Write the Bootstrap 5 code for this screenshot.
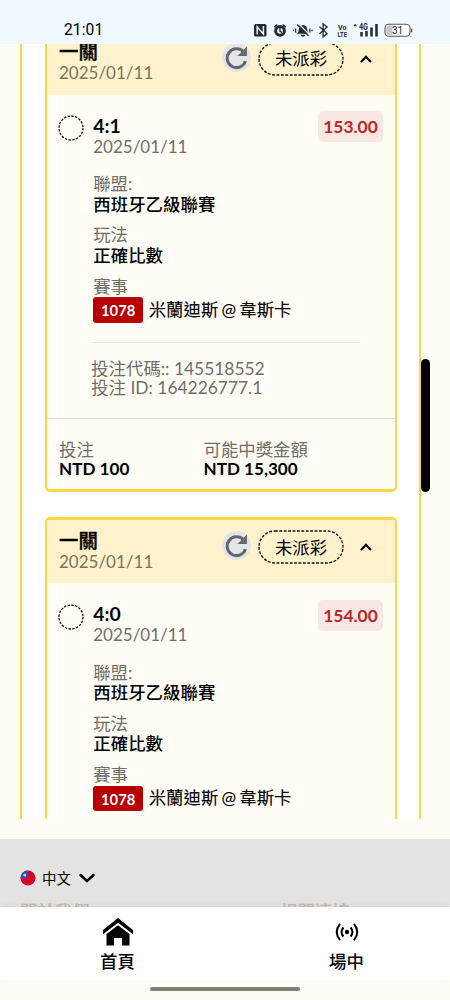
<!DOCTYPE html>
<html lang="zh-Hant">
<head>
<meta charset="utf-8">
<meta name="viewport" content="width=device-width, initial-scale=1">
<title>投注記錄</title>
<link href="https://cdn.jsdelivr.net/npm/bootstrap@5.3.0/dist/css/bootstrap.min.css" rel="stylesheet">
<style>
body{font-family:Lato,"Noto Sans CJK TC",sans-serif;font-size:17.4px;line-height:20.5px;color:#000;background:#fffdf5;width:450px;height:1000px}
.statusbar{height:44px;background:#eff7ff;padding:17px 37px 0 64px}
.clock{font:15.6px/27px Roboto,sans-serif;letter-spacing:.1px}
.viewport{height:775px}
.panel{width:401px;margin-left:20px;height:775px;background:#fff;border:solid #f9d648;border-width:0 2.5px;padding:0 22.5px 0 23px}
.bet{height:463.5px;margin-bottom:25px;border:2.5px solid #f8d748;border-width:3px 2.5px;border-radius:5px;background:#fffdf5}
.bet.scrolled{margin-top:-15.5px}
.bet-head{height:63px;background:#fff2cd;padding:10px 0 0 12px}
.title{font-size:19.4px;font-weight:700;position:relative;top:.5px}
.bet-head .title{-webkit-text-stroke:.35px #000;font-weight:500}
.date{font-size:17px;position:relative;top:1px}
.tools{margin-right:21.5px;gap:7px}
.refresh{width:29px;height:29px;border-radius:50%;background:#e3e5e9;margin-top:-3px}
.pill{width:86px;height:34px;font-size:17.4px}
.pill span{padding-top:2px}
.muted{color:#6f6e6a}
.bet-head .muted{color:#7d7359}
.strong{font-weight:500;letter-spacing:.08px}
.teams{word-spacing:-1.2px;-webkit-text-stroke:.1px #000}
.bet-main{padding:20.5px 0 0 12px;height:323px}
.ring{width:26px;height:26px;margin-right:8.8px;margin-left:-.6px}
.odds{width:65px;height:31px;line-height:32px;margin:-4px 11.5px 0 0;border-radius:5px;background:#f8e7e2;color:#b9292b;font-weight:700;font-size:17.4px;text-align:center}
.field{margin-bottom:10.3px}
.first{margin-top:18px}
.code{background:#b90000;color:#fff;width:50px;height:25.5px;line-height:26px;border-radius:3px;font-size:14.8px;font-weight:700;text-align:center;margin-right:5.5px}
.rule{height:1.5px;background:#e6e3da;width:266px;margin-top:19px}
.ids{line-height:18.5px;margin:17px 0 0 -2px}
.bet-foot{border-top:1px solid #e0ddd6;padding:22.5px 0 0 12px;line-height:18.5px}
.sum{font-size:17.1px;font-weight:700}
.stake{width:144.5px}
.thumb{left:421px;top:359px;width:9px;height:133px;border-radius:5px;background:#000}
.foot{height:68px;margin-top:20px;background:#e3e3e3;padding:28.5px 20px 0}
.lang{font-size:14.5px;line-height:20px}
.lang span{margin:1px 7px 0 6px}
.links{margin-top:13px;line-height:20px;color:#cbb8a8;font-weight:500}
.tabs{height:73px;background:#fff;padding-left:3px;box-shadow:0 -1px 6px rgba(0,0,0,.06);position:relative}
.tab{flex:0 0 229px;padding-top:10px;line-height:22px;font-weight:500}
.homebar{width:150px;height:4px;border-radius:2px;background:#827f76;margin:7px auto 0}
</style>
</head>
<body class="overflow-hidden">
<svg class="d-none">
<symbol id="re" viewBox="0 0 24 24"><path d="M18.600 6.500A9 9 0 1 0 20.600 15.500" fill="none" stroke="#65676b" stroke-width="2.900"/><path d="M22 1.500v9h-9z" fill="#65676b"/></symbol>
<symbol id="up" viewBox="0 0 14 10"><path d="M2 8l5-5.2L12 8" fill="none" stroke="#000" stroke-width="2.2"/></symbol>
<symbol id="ri" viewBox="0 0 26 26"><circle cx="13" cy="13" r="12" fill="none" stroke="#111" stroke-width="1.3" stroke-dasharray="2.4 1.37"/></symbol>
<symbol id="pi" viewBox="0 0 86 34"><rect x="1" y="1" width="84" height="32" rx="16" fill="none" stroke="#111" stroke-width="1.4" stroke-dasharray="2.8 1.6"/></symbol>
</svg>
<header class="statusbar d-flex justify-content-between">
<span class="clock">21:01</span>
<svg width="164" height="26" viewBox="252 17 164 26" style="margin-right:-3px">
<rect x="254" y="24" width="12.5" height="12.5" rx="1.6" fill="#252a2e"/><path d="M257.200 34.500v-7.500l6.200 7v-8" fill="none" stroke="#eff7ff" stroke-width="1.5"/>
<circle cx="280" cy="30.800" r="4.400" fill="none" stroke="#252a2e" stroke-width="3"/><path d="M280 28v3.300l2 1M274.300 27.200l3-2.800M285.700 27.200l-3-2.800" stroke="#252a2e" stroke-width="1.400" fill="none"/>
<path d="M297 33.800q1.800-1.200 1.800-4.800q.3-3.600 4.200-4q3.900.4 4.200 4q0 3.600 1.800 4.800zM300.500 34.800h5q-.5 1.900-2.500 1.900t-2.500-1.900z" fill="#252a2e"/><path d="M298.500 23.800l10.500 10.500" stroke="#eff7ff" stroke-width="1.300"/><path d="M297.200 24.500l11.300 11.300M295.600 28.500v4M293.400 29.800v1.500M309.800 28.500v4M312 29.800v1.500" stroke="#252a2e" stroke-width="1.300"/>
<path d="M319.500 26.800l7.600 6.800-4 3.200V23.800l4 3.200-7.600 6.800" fill="none" stroke="#252a2e" stroke-width="1.300"/>
<g font-family="Roboto" font-weight="700" fill="#252a2e"><text x="338" y="29.500" font-size="7.800" textLength="8.500" lengthAdjust="spacingAndGlyphs">Vo</text><text x="337.500" y="36.600" font-size="7.800" textLength="9.500" lengthAdjust="spacingAndGlyphs">LTE</text><text x="359" y="29.800" font-size="8.400" textLength="9" lengthAdjust="spacingAndGlyphs">4G</text></g>
<path d="M353.300 26.200l1.900-2.500 1.900 2.500z" fill="#252a2e"/>
<path d="M361.500 32v4.500M366.500 31v5.500M371.500 27.500v9M376.500 24v12.500" stroke="#252a2e" stroke-width="2.500"/>
<rect x="385" y="24.300" width="25" height="12" rx="3.800" fill="#fff" stroke="#555a5e" stroke-width="1.100"/><path d="M388.500 25.500h4v9.700h-4q-2.300 0-2.300-2.500v-4.700q0-2.500 2.300-2.500z" fill="#c3c9ce"/><path d="M411.700 28.700v3.500" stroke="#444" stroke-width="1.200"/><text x="397.500" y="34" text-anchor="middle" font-family="Roboto" font-size="10" fill="#222">31</text>
</svg>
</header>
<main class="viewport overflow-hidden">
<div class="panel overflow-hidden">
<article class="bet scrolled">
<div class="bet-head d-flex justify-content-between">
<div><div class="title">一關</div><div class="date muted">2025/01/11</div></div>
<div class="tools d-flex align-items-center align-self-start">
<span class="refresh d-flex align-items-center justify-content-center"><svg width="25" height="25"><use href="#re"/></svg></span>
<span class="pill position-relative d-flex align-items-center justify-content-center"><svg class="position-absolute top-0 start-0" width="86" height="34"><use href="#pi"/></svg><span>未派彩</span></span>
<svg width="14" height="10" class="ms-2"><use href="#up"/></svg>
</div></div>
<div class="bet-main d-flex align-items-start">
<svg class="ring" width="26" height="26"><use href="#ri"/></svg>
<div class="flex-grow-1">
<div class="d-flex justify-content-between"><div><div class="title">4:1</div><div class="date muted">2025/01/11</div></div><div class="odds">153.00</div></div>
<div class="field first"><div class="muted">聯盟:</div><div class="strong">西班牙乙級聯賽</div></div>
<div class="field"><div class="muted">玩法</div><div class="strong">正確比數</div></div>
<div class="muted">賽事</div>
<div class="d-flex align-items-center"><span class="code">1078</span><span class="teams">米蘭迪斯 @ 韋斯卡</span></div>
<div class="rule"></div>
<div class="ids muted">投注代碼:: 145518552<br>投注 ID: 164226777.1</div>
</div></div>
<div class="bet-foot d-flex"><div class="stake"><div class="muted">投注</div><div class="sum">NTD 100</div></div><div><div class="muted">可能中獎金額</div><div class="sum">NTD 15,300</div></div></div>
</article>
<article class="bet">
<div class="bet-head d-flex justify-content-between">
<div><div class="title">一關</div><div class="date muted">2025/01/11</div></div>
<div class="tools d-flex align-items-center align-self-start">
<span class="refresh d-flex align-items-center justify-content-center"><svg width="25" height="25"><use href="#re"/></svg></span>
<span class="pill position-relative d-flex align-items-center justify-content-center"><svg class="position-absolute top-0 start-0" width="86" height="34"><use href="#pi"/></svg><span>未派彩</span></span>
<svg width="14" height="10" class="ms-2"><use href="#up"/></svg>
</div></div>
<div class="bet-main d-flex align-items-start">
<svg class="ring" width="26" height="26"><use href="#ri"/></svg>
<div class="flex-grow-1">
<div class="d-flex justify-content-between"><div><div class="title">4:0</div><div class="date muted">2025/01/11</div></div><div class="odds">154.00</div></div>
<div class="field first"><div class="muted">聯盟:</div><div class="strong">西班牙乙級聯賽</div></div>
<div class="field"><div class="muted">玩法</div><div class="strong">正確比數</div></div>
<div class="muted">賽事</div>
<div class="d-flex align-items-center"><span class="code">1078</span><span class="teams">米蘭迪斯 @ 韋斯卡</span></div>
</div></div>
</article>
</div>
</main>
<div class="thumb position-absolute"></div>
<footer class="foot overflow-hidden">
<div class="lang d-flex align-items-center">
<svg width="16" height="16" viewBox="0 0 16 16"><circle cx="8" cy="8" r="7.500" fill="#d80027"/><path d="M.5 8A7.500 7.500 0 0 1 8 .5V8z" fill="#1e55b5"/><circle cx="4.700" cy="5" r="1.500" fill="#b9d0f5"/></svg>
<span>中文</span>
<svg width="18" height="12" viewBox="0 0 18 12"><path d="M2.500 3l6.500 6 6.500-6" fill="none" stroke="#000" stroke-width="2.500" stroke-linecap="round"/></svg>
</div>
<div class="links d-flex"><span style="width:260px">關於我們</span><span>相關連接</span></div>
</footer>
<nav class="tabs d-flex overflow-hidden">
<div class="tab d-flex flex-column align-items-center">
<svg width="32" height="30" viewBox="0 0 32 30"><path d="M16 1l15 12v4.200L16 5.800 1 17.200V13z"/><path d="M16 8.300l11.500 8.700v11.500H20V21h-8v7.500H4.500V17z"/></svg>
<span class="mt-1">首頁</span></div>
<div class="tab d-flex flex-column align-items-center">
<svg width="26" height="30" viewBox="0 0 26 30"><circle cx="13" cy="15" r="2.200"/><path d="M9.500 10.500q-4 4.500 0 9M16.500 10.500q4 4.500 0 9M6 6.800q-6.500 8.200 0 16.400M20 6.800q6.500 8.200 0 16.400" fill="none" stroke="#000" stroke-width="2"/></svg>
<span class="mt-1">場中</span></div>
</nav>
<div class="homebar"></div>
<script src="https://cdn.jsdelivr.net/npm/bootstrap@5.3.0/dist/js/bootstrap.bundle.min.js"></script>
</body>
</html>
